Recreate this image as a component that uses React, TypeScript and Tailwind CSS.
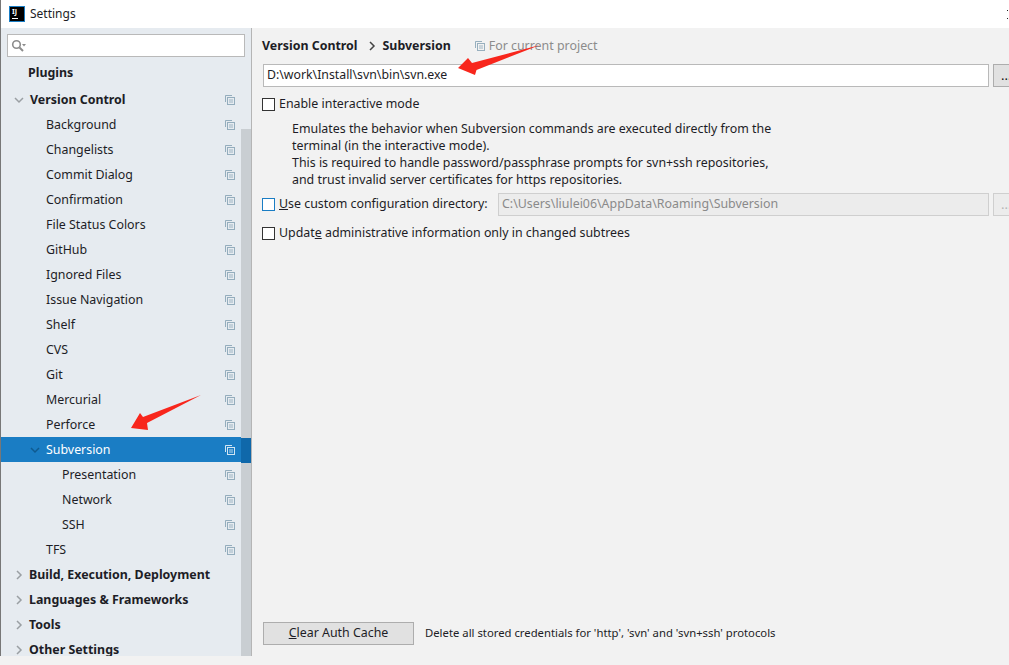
import type { ReactNode } from "react";

const font = { fontFamily: '"Noto Sans", "Open Sans", sans-serif' };

function CopyIcon({ light }: { light?: boolean }) {
  const c = light ? "#ffffff" : "#7f9db0";
  return (
    <svg width="10" height="10" viewBox="0 0 10 10" fill="none" className="shrink-0">
      <path d="M0.5 7V0.5H7" stroke={c} strokeOpacity="0.8" />
      <rect x="2.5" y="2.5" width="7" height="7" stroke={c} strokeOpacity="0.8" />
      <path d="M4 5h4M4 7h4" stroke={c} strokeOpacity="0.7" />
    </svg>
  );
}

function Chevron({ dir, color = "#9a9fa3" }: { dir: "down" | "right"; color?: string }) {
  return (
    <svg width="10" height="10" viewBox="0 0 10 10" fill="none" className="shrink-0">
      {dir === "down" ? (
        <path d="M1 3l4 4 4-4" stroke={color} strokeWidth="1.5" />
      ) : (
        <path d="M3 1l4 4-4 4" stroke={color} strokeWidth="1.5" />
      )}
    </svg>
  );
}

function Row({
  label,
  indent,
  bold,
  chevron,
  copy = true,
  selected,
}: {
  label: string;
  indent: string;
  bold?: boolean;
  chevron?: "down" | "right";
  copy?: boolean;
  selected?: boolean;
}) {
  return (
    <div className={`relative flex h-[25px] items-center pr-[16px] ${selected ? "bg-[#1a7dc4] text-white" : "text-[#1d1d26]"}`}>
      {chevron && (
        <span className={`absolute top-[8px] flex ${selected ? "left-[29px]" : "left-[13px]"}`}>
          <Chevron dir={chevron} color={selected ? "#0f5a90" : "#9a9fa3"} />
        </span>
      )}
      <span className={`${indent} flex-1 whitespace-nowrap pt-[2px] text-[12.4px] leading-none ${bold ? "font-bold" : ""}`}>{label}</span>
      {copy && <CopyIcon light={selected} />}
    </div>
  );
}

function Checkbox({ focused }: { focused?: boolean }) {
  return (
    <span className={`h-[13px] w-[13px] shrink-0 border bg-white ${focused ? "border-[#1a7dc4]" : "border-[#333333]"}`} />
  );
}

function Check({ children, focused }: { children: ReactNode; focused?: boolean }) {
  return (
    <div className="flex h-[20px] shrink-0 items-center gap-[4px] whitespace-nowrap text-[12.4px] text-[#1d1d26]">
      <Checkbox focused={focused} />
      <span>{children}</span>
    </div>
  );
}

const vcsItems = [
  "Background",
  "Changelists",
  "Commit Dialog",
  "Confirmation",
  "File Status Colors",
  "GitHub",
  "Ignored Files",
  "Issue Navigation",
  "Shelf",
  "CVS",
  "Git",
  "Mercurial",
  "Perforce",
];

export default function App() {
  return (
    <div className="relative flex h-[665px] w-[1009px] flex-col overflow-hidden bg-[#f2f2f2]" style={font}>
      {/* title bar */}
      <div className="flex h-[28px] shrink-0 items-center border-l border-l-[#777777] bg-white pl-[8px]">
        <div className="relative h-[16px] w-[16px] border border-[#1a7dc4] bg-black">
          <span className="absolute left-[2px] top-[0px] text-[7px] font-bold leading-[9px] text-white">IJ</span>
          <span className="absolute bottom-[2px] left-[2px] h-[1px] w-[6px] bg-white" />
        </div>
        <span className="ml-[5px] text-[12px] text-[#1d1d26]">Settings</span>
        <span className="ml-auto mr-[1px] h-[9px] w-[1px] border-y border-y-[#222222]" />
      </div>

      <div className="flex min-h-0 flex-1">
        {/* sidebar */}
        <div className="flex h-[628px] w-[252px] shrink-0 flex-col self-start overflow-hidden border-x border-l-[#777777] border-r-[#b5b5b5] bg-[#e6ebf0]">
          <div className="mx-[6px] mt-[6px] flex h-[23px] shrink-0 items-center border border-[#b9b9b9] bg-white pl-[3px]">
            <svg width="16" height="14" viewBox="0 0 16 14" fill="none">
              <circle cx="5.5" cy="5.5" r="3.8" stroke="#8c8c8c" strokeWidth="1.6" />
              <path d="M8.5 8.5l3.5 3.5" stroke="#8c8c8c" strokeWidth="2" />
              <path d="M11 5h4l-2 2.5z" fill="#8c8c8c" />
            </svg>
          </div>
          <div className="relative flex min-h-0 flex-1">
            <div className="min-w-0 flex-1">
              <div className="mt-[3px]">
                <Row label="Plugins" indent="pl-[27px]" bold copy={false} />
              </div>
              <div className="mt-[2px]">
                <Row label="Version Control" indent="pl-[29px]" bold chevron="down" />
              </div>
              {vcsItems.map((label) => (
                <Row key={label} label={label} indent="pl-[45px]" />
              ))}
              <Row label="Subversion" indent="pl-[45px]" chevron="down" selected />
              <Row label="Presentation" indent="pl-[61px]" />
              <Row label="Network" indent="pl-[61px]" />
              <Row label="SSH" indent="pl-[61px]" />
              <Row label="TFS" indent="pl-[45px]" />
              <Row label="Build, Execution, Deployment" indent="pl-[28px]" bold chevron="right" copy={false} />
              <Row label="Languages & Frameworks" indent="pl-[28px]" bold chevron="right" copy={false} />
              <Row label="Tools" indent="pl-[28px]" bold chevron="right" copy={false} />
              <Row label="Other Settings" indent="pl-[28px]" bold chevron="right" copy={false} />
            </div>
            {/* scrollbar thumb */}
            <div className="absolute bottom-0 right-0 top-[72px] w-[10px] bg-[#c9ced2]" />
            <div className="absolute right-0 top-[381px] h-[25px] w-[10px] bg-[#0f68aa]" />
          </div>
        </div>

        {/* content */}
        <div className="flex min-w-0 flex-1 flex-col pl-[10px]">
          <div className="mt-[8px] flex h-[20px] items-center whitespace-nowrap text-[12.4px] text-[#1d1d26]">
            <span className="font-bold">Version Control</span>
            <span className="ml-[9px] flex">
              <Chevron dir="right" color="#444444" />
            </span>
            <span className="ml-[6px] font-bold">Subversion</span>
            <span className="ml-[24px] flex items-center gap-[4px] font-normal text-[#8c8c8c]">
              <CopyIcon />
              For current project
            </span>
          </div>
          <div className="ml-[1px] mt-[8px] flex w-[760px] gap-[4px]">
            <div className="flex h-[23px] w-[726px] shrink-0 items-center border border-[#b9b9b9] bg-white pl-[3px] text-[12.3px] text-[#1d1d26]">
              D:\work\Install\svn\bin\svn.exe
            </div>
            <div className="flex h-[23px] w-[24px] shrink-0 items-center border border-[#adadad] bg-[#e1e1e1] pl-[7px] text-[13px] leading-none text-[#111111]">
              ...
            </div>
          </div>
          <div className="mt-[7px]">
            <Check>Enable interactive mode</Check>
          </div>
          <div className="mt-[7px] pl-[30px] text-[12.4px] leading-[16.9px] text-[#1d1d26]">
            <p>Emulates the behavior when Subversion commands are executed directly from the</p>
            <p>terminal (in the interactive mode).</p>
            <p>This is required to handle password/passphrase prompts for svn+ssh repositories,</p>
            <p>and trust invalid server certificates for https repositories.</p>
          </div>
          <div className="mt-[4px] flex items-center">
            <div className="w-[236px] shrink-0 pt-[1px]">
              <Check focused>
                <span className="underline">U</span>se custom configuration directory:
              </Check>
            </div>
            <div className="flex h-[23px] w-[491px] shrink-0 items-center border border-[#cfcfcf] bg-[#ececec] pl-[3px] text-[12.4px] text-[#8a8a8a]">
              C:\Users\liulei06\AppData\Roaming\Subversion
            </div>
            <div className="ml-[4px] flex h-[23px] w-[24px] shrink-0 items-center border border-[#cfcfcf] bg-[#ececec] pl-[7px] text-[13px] leading-none text-[#b5b5b5]">
              ...
            </div>
          </div>
          <div className="mt-[8px]">
            <Check>
              Updat<span className="underline">e</span> administrative information only in changed subtrees
            </Check>
          </div>
          <div className="mb-[20px] ml-[1px] mt-auto flex items-center">
            <div className="flex h-[23px] w-[151px] items-center justify-center border border-[#adadad] bg-[#e1e1e1] text-[12.4px] text-[#1d1d26]">
              <span>
                <span className="underline">C</span>lear Auth Cache
              </span>
            </div>
            <span className="ml-[11px] text-[11.3px] text-[#1d1d26]">
              Delete all stored credentials for 'http', 'svn' and 'svn+ssh' protocols
            </span>
          </div>
        </div>
      </div>

      {/* red annotation arrows */}
      <svg className="pointer-events-none absolute left-0 top-0" width="1009" height="665" viewBox="0 0 1009 665" fill="none">
        <path d="M540 45L472 63L468 58L458 68L475 75L476.5 70Z" fill="#f8261c" />
        <path d="M201 395L143 417L140 413L131 428L148 430L147 423Z" fill="#f8261c" />
      </svg>
    </div>
  );
}
